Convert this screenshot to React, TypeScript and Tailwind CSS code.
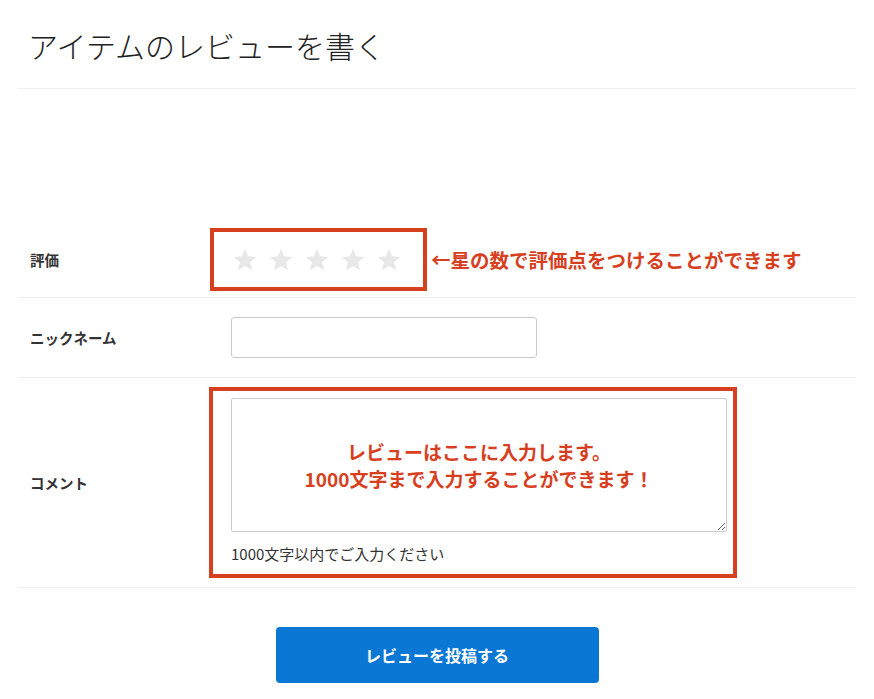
import React from "react";

const RED = "#d7401f";

function Star() {
  return (
    <svg width="26" height="26" viewBox="0 0 24 24" aria-hidden="true">
      <polygon
        points="12,1.5 14.9,8.6 22.5,9.2 16.7,14.1 18.5,21.6 12,17.6 5.5,21.6 7.3,14.1 1.5,9.2 9.1,8.6"
        fill="#e8e8e8"
      />
    </svg>
  );
}

export default function App() {
  const font = { fontFamily: '"Noto Sans CJK JP", "Noto Sans", sans-serif' };
  return (
    <div className="w-[874px] min-h-[699px] bg-white px-[18px]" style={font}>
      <div className="h-[89px] border-b border-[#eeeeee] pt-[27px] pl-[10px]">
        <h1 className="text-[30px] leading-[36px] font-light text-[#222]">アイテムのレビューを書く</h1>
      </div>
      <div className="h-[127px]" />

      <div className="flex items-center border-b border-[#eeeeee] pt-[12px] pb-[6px]">
        <div className="w-[191px] pl-[12px] text-[14.5px] font-bold text-[#333]">評価</div>
        <div className="ml-[1px] flex items-center">
          <div className="box-border flex h-[63px] w-[217px] items-center gap-[10px] border-[4px] pl-[18px]" style={{ borderColor: RED }}>
            <Star />
            <Star />
            <Star />
            <Star />
            <Star />
          </div>
          <span className="ml-[4px] text-[19.5px] font-bold leading-none" style={{ color: RED }}>
            ←星の数で評価点をつけることができます
          </span>
        </div>
      </div>

      <div className="flex items-center border-b border-[#eeeeee] pt-[19px] pb-[19px]">
        <div className="w-[191px] pl-[12px] text-[14.5px] font-bold text-[#333]">ニックネーム</div>
        <input type="text" className="ml-[22px] box-border h-[41px] w-[306px] rounded-[3px] border border-[#cccccc] bg-white px-2 outline-none" />
      </div>

      <div className="flex items-center border-b border-[#eeeeee] pt-[9px] pb-[9px]">
        <div className="w-[191px] pl-[12px] text-[14.5px] font-bold text-[#333]">コメント</div>
        <div className="box-border w-[528px] border-[4px] pl-[18px] pr-[6px] pt-[7px] pb-[10px]" style={{ borderColor: RED }}>
          <div className="relative h-[134px] w-[496px]">
            <textarea className="box-border block h-[134px] w-[496px] rounded-[2px] border border-[#cccccc] bg-white outline-none" />
            <div className="pointer-events-none absolute inset-0 flex flex-col items-center justify-center text-[19px] font-bold leading-[27px]" style={{ color: RED }}>
              <span>レビューはここに入力します。</span>
              <span>1000文字まで入力することができます！</span>
            </div>
          </div>
          <div className="mt-[12px] text-[15px] leading-[20px] text-[#333]">1000文字以内でご入力ください</div>
        </div>
      </div>

      <div className="mt-[39px] flex justify-center">
        <button className="h-[56px] w-[323px] rounded-[4px] bg-[#0a77d5] text-[16px] font-bold text-white">
          レビューを投稿する
        </button>
      </div>
    </div>
  );
}
